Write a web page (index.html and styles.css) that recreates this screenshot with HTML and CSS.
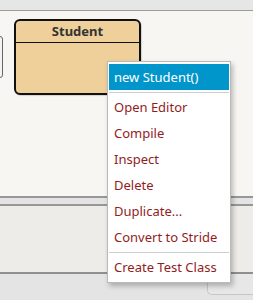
FILE: index.html
```html
<!DOCTYPE html>
<html>
<head>
<meta charset="utf-8">
<link rel="stylesheet" href="styles.css">
</head>
<body>
<div class="app">
  <div class="topbar"></div>
  <div class="canvas">
    <div class="classbox ghost"></div>
    <div class="classbox student">
      <div class="classname">Student</div>
      <div class="classbody"></div>
    </div>
  </div>
  <div class="band"></div>
  <div class="panel"></div>
  <div class="bottom">
    <div class="btnbox"></div>
  </div>
  <div class="menu">
    <div class="item active">new Student()</div>
    <div class="sep"></div>
    <div class="item">Open Editor</div>
    <div class="item">Compile</div>
    <div class="item">Inspect</div>
    <div class="item">Delete</div>
    <div class="item">Duplicate...</div>
    <div class="item">Convert to Stride</div>
    <div class="sep"></div>
    <div class="item">Create Test Class</div>
  </div>
</div>
</body>
</html>
```

FILE: styles.css
```css
* { box-sizing: border-box; }
html, body { margin: 0; padding: 0; }
body {
  width: 253px;
  height: 300px;
  overflow: hidden;
  font-family: "Noto Sans", "Open Sans", sans-serif;
  background: #e4e4e4;
}
.app {
  position: relative;
  width: 253px;
  height: 300px;
  display: flex;
  flex-direction: column;
}
.topbar {
  height: 11px;
  background: #e6e6e6;
  border-bottom: 1px solid #9c9c9c;
}
.canvas {
  position: relative;
  height: 187px;
  background: #f7f6f2;
  border-bottom: 2px solid #979797;
}
.classbox {
  position: absolute;
  border: 2px solid #111;
  border-radius: 6px;
  background: #efcf9a;
  display: flex;
  flex-direction: column;
}
.ghost {
  left: -20px;
  top: 25px;
  width: 23px;
  height: 42px;
  border: 1px solid #666;
  border-radius: 3px;
  background: #f3f3f1;
}
.student {
  left: 14px;
  top: 8px;
  width: 127px;
  height: 76px;
  box-shadow: 1px 1px 1px rgba(0,0,0,0.15);
}
.classname {
  height: 22px;
  border-bottom: 1.5px solid #111;
  text-align: center;
  font-weight: bold;
  font-size: 13px;
  line-height: 20px;
  color: #333;
}
.classbody { flex: 1; }
.band {
  height: 8px;
  background: #e4e4e4;
  border-bottom: 2px solid #979797;
}
.panel {
  height: 68px;
  background: #edece8;
  border-bottom: 2px solid #8f8f8f;
}
.bottom {
  flex: 1;
  display: flex;
  justify-content: flex-end;
  background: #e4e4e4;
}
.btnbox {
  width: 46px;
  height: 21px;
  border: 1px solid #c6c6c6;
  border-top: none;
  border-right: none;
  border-bottom-left-radius: 5px;
  background: #e7e7e7;
}
.menu {
  position: absolute;
  left: 107px;
  top: 61px;
  width: 124px;
  background: #fff;
  border: 1px solid #b9b9b9;
  padding: 1px 1px 2px 1px;
  box-shadow: 2px 3px 5px rgba(0,0,0,0.25);
}
.item {
  height: 26px;
  line-height: 26px;
  padding-left: 5px;
  font-size: 13px;
  color: #921d1d;
  white-space: nowrap;
}
.item.active {
  background: #0096cb;
  color: #fff;
  margin-top: 1px;
}
.sep {
  height: 1px;
  background: #cfcfcf;
  margin: 2px 0 1px 0;
}
```
